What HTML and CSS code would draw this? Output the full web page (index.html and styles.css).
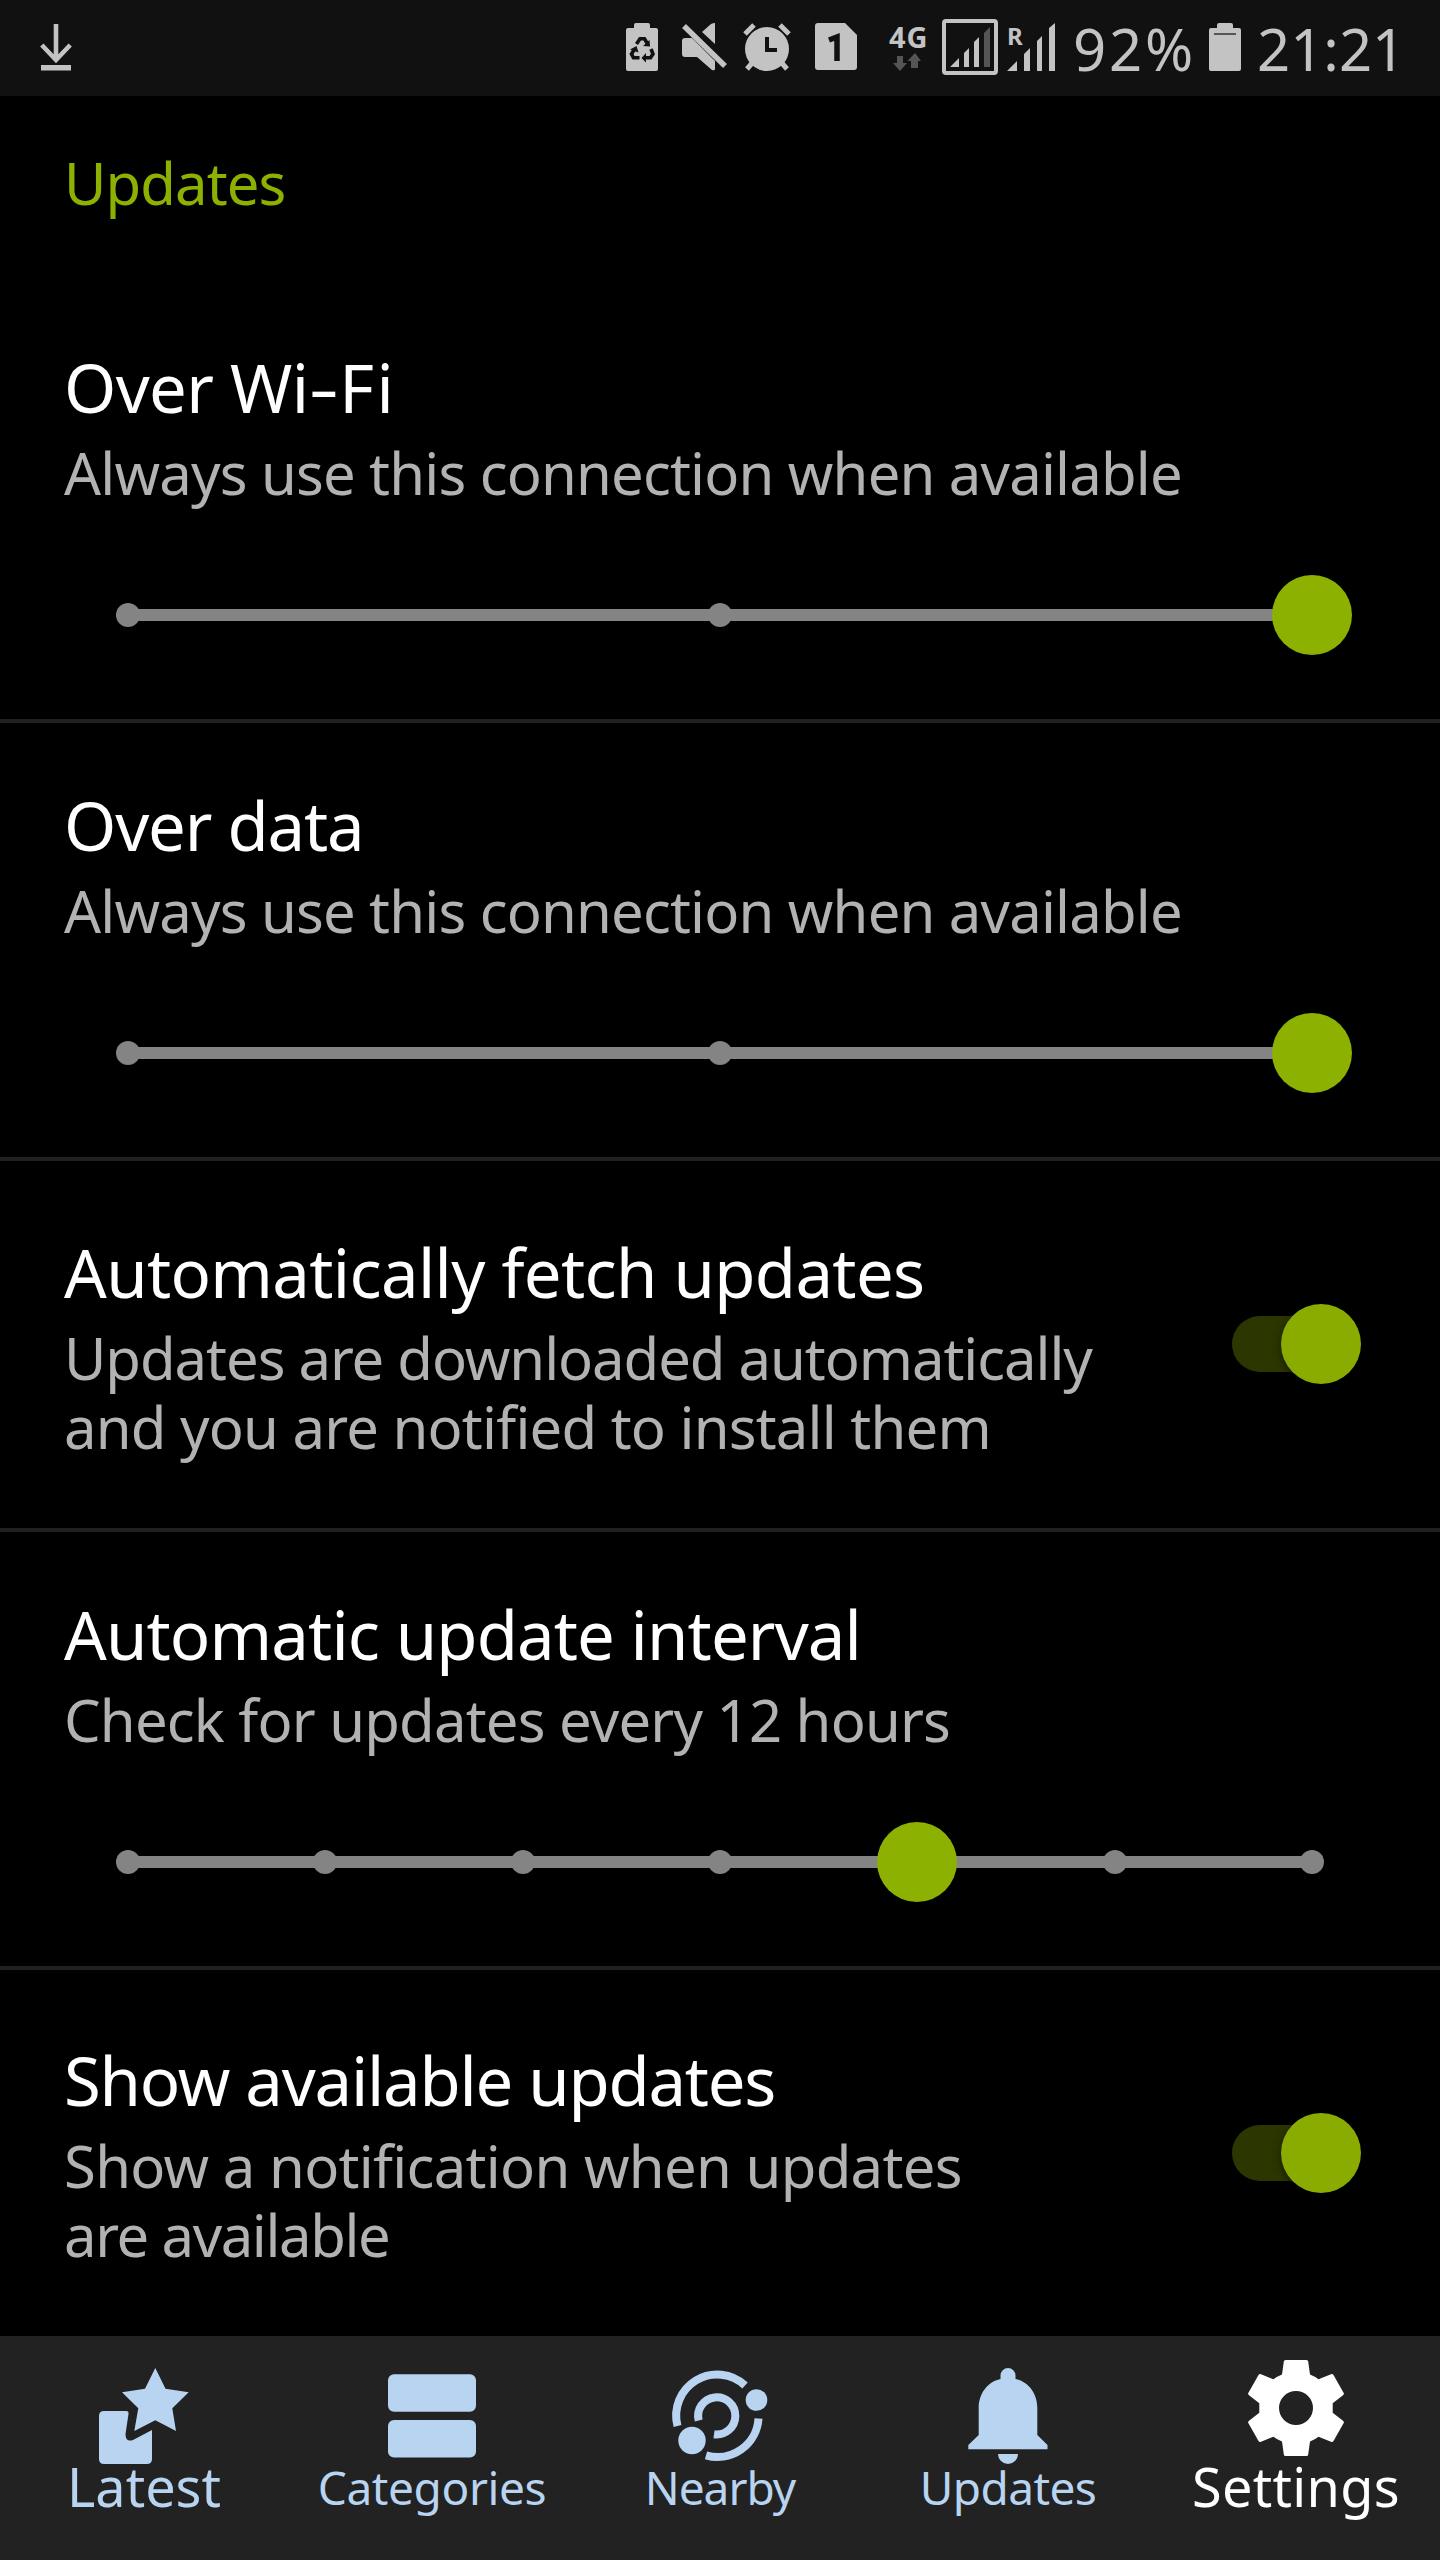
FILE: index.html
```html
<!DOCTYPE html>
<html lang="en">
<head>
<meta charset="utf-8">
<title>Settings</title>
<link rel="stylesheet" href="styles.css">
</head>
<body>
<header class="status">
  <svg class="icon download" width="32" height="48" viewBox="0 0 32 48"><path d="M16 1V37M1.800 22L16 37L30.200 22" fill="none" stroke="currentColor" stroke-width="4.600"/><path d="M1 42H31V47.500H1Z"/></svg>
  <svg class="icon saver" width="32" height="48" viewBox="0 0 32 48"><path d="M2 5H8V2Q8 0 10 0H22Q24 0 24 2V5H30Q32 5 32 7V46Q32 48 30 48H2Q0 48 0 46V7Q0 5 2 5Z"/><g fill="none" stroke="#111" stroke-width="3.600"><path d="M10.500 21L14 15.800H18.500L21 20M25 26L27 31L24.500 34.800H19M13.500 34.800H7.500L5.500 31L8 27"/></g><g fill="#111"><path d="M17 23L24 23.500L23.500 17ZM20 30V39.500L15.500 35ZM4 26.500L10.500 23L12.500 29.500Z"/></g></svg>
  <svg class="icon mute" width="46" height="48" viewBox="0 0 46 48"><path d="M33 0V21L20 9L29 1Q31 0 33 0ZM3 15H10L33 38V46Q33 48 30 47L15 34H3Q0 34 0 31V18Q0 15 3 15Z"/><path d="M5 0L46 40" stroke="#111" stroke-width="5"/><path d="M2 3L43 43" stroke="currentColor" stroke-width="5.500"/></svg>
  <svg class="icon alarm" width="48" height="48" viewBox="0 0 48 48"><circle cx="24" cy="26" r="22"/><g stroke="currentColor" stroke-width="5"><path d="M2 11L11 2M37 2L46 11M4 46L10 39M44 46L38 39"/></g><path d="M24 14V27H34" fill="none" stroke="#111" stroke-width="4"/></svg>
  <svg class="icon sim" width="42" height="47" viewBox="0 0 42 47"><path d="M3 0H30L42 12V44Q42 47 39 47H3Q0 47 0 44V3Q0 0 3 0Z"/><path d="M14 17L22 14V38" fill="none" stroke="#111" stroke-width="5.500"/></svg>
  <div class="network"><span class="network-type">4G</span>
    <svg class="arrows" width="28" height="18" viewBox="0 0 28 18"><path d="M4 3H10V10H14L7 18L0 10H4ZM18 15V8H14.500L22 0L28 8H25V15Z"/></svg></div>
  <svg class="icon signal" width="56" height="56" viewBox="0 0 56 56"><rect x="2" y="2" width="52" height="52" rx="2" fill="none" stroke="currentColor" stroke-width="4"/><path d="M8 48L17 39V48ZM22 48V34L27 29V48ZM32 48V23L37 18V48Z"/><path d="M42 48V14L48 8V48Z" fill="#555"/></svg>
  <div class="roaming"><span class="roaming-mark">R</span>
    <svg class="icon" width="48" height="48" viewBox="0 0 48 48"><path d="M0 48L10 38V48ZM17 48V31L23 25V48ZM30 48V18L35 13V48ZM42 48V5L48 0V48Z"/></svg></div>
  <span class="percent">92%</span>
  <svg class="icon battery" width="32" height="48" viewBox="0 0 32 48"><path d="M2 5H8V2Q8 0 10 0H22Q24 0 24 2V5H30Q32 5 32 7V46Q32 48 30 48H2Q0 48 0 46V7Q0 5 2 5Z"/><path d="M5 10H27V12H5Z" fill="#555"/></svg>
  <span class="clock">21:21</span>
</header>

<main>
  <h2 class="section">Updates</h2>

  <section class="row">
    <h3 class="title">Over Wi<span class="hyphen">-</span><span class="fi">Fi</span></h3>
    <p class="summary s-always">Always use this connection when available</p>
    <div class="slider"><i class="tick"></i><i class="tick"></i><i class="tick thumb"></i></div>
  </section>

  <section class="row">
    <h3 class="title t-data">Over data</h3>
    <p class="summary s-always">Always use this connection when available</p>
    <div class="slider"><i class="tick"></i><i class="tick"></i><i class="tick thumb"></i></div>
  </section>

  <section class="row row-switch">
    <div>
      <h3 class="title t-fetch">Automatically fetch updates</h3>
      <p class="summary"><span class="s-down">Updates are downloaded automatically</span><br><span class="s-and">and you are notified to install them</span></p>
    </div>
    <div class="switch"><i class="knob"></i></div>
  </section>

  <section class="row">
    <h3 class="title t-interval">Automatic update interval</h3>
    <p class="summary s-check">Check for updates every 12 hours</p>
    <div class="slider"><i class="tick"></i><i class="tick"></i><i class="tick"></i><i class="tick"></i><i class="tick thumb"></i><i class="tick"></i><i class="tick"></i></div>
  </section>

  <section class="row row-switch">
    <div>
      <h3 class="title t-show">Show available updates</h3>
      <p class="summary"><span class="s-show">Show a notification when updates</span><br><span class="s-are">are available</span></p>
    </div>
    <div class="switch"><i class="knob"></i></div>
  </section>
</main>

<nav class="tabs">
  <a class="tab tab-large">
    <svg width="96" height="96" viewBox="-8 0 96 96"><path d="M51.300 0L61.500 20.700L84.700 24.300L68.300 40.300L72 63L51.300 52.300L30.300 63L34.300 40.300L18 24.300L41 20.700Z"/><path d="M0 43H22Q25 43 24.500 46L21.500 66Q21.500 74.500 29 72L48 62V91Q48 96 43 96H0Q-5 96-5 91V48Q-5 43 0 43Z"/></svg>
    <span class="l-latest">Latest</span></a>
  <a class="tab">
    <svg width="96" height="96" viewBox="0 0 96 96"><rect x="4" y="6.300" width="88" height="37.500" rx="6"/><rect x="4" y="52" width="88" height="37.500" rx="6"/></svg>
    <span class="l-categories">Categories</span></a>
  <a class="tab">
    <svg width="96" height="96" viewBox="0 0 96 96"><g fill="none" stroke="currentColor" stroke-width="8"><path d="M5.500 58A41 41 0 0 1 73 17.500M86.500 50.500A41 41 0 0 1 34 87.300"/><path d="M26.700 52.500A18.600 18.600 0 1 1 42 66.300"/></g><circle cx="84.500" cy="32" r="10.800"/><circle cx="20" cy="72.500" r="13.700"/></svg>
    <span class="l-nearby">Nearby</span></a>
  <a class="tab">
    <svg width="96" height="96" viewBox="0 0 96 96"><path d="M40.500 11V7.500A7.500 7.500 0 0 1 55.500 7.500V11C69 14 77.300 26 77.300 40V67L87.500 77V81.300H8.300V77L18.700 67V40C18.700 26 27 14 40.500 11ZM38 86H58A10 10 0 0 1 38 86Z"/></svg>
    <span class="l-updates">Updates</span></a>
  <a class="tab tab-large tab-active">
    <svg width="96" height="96" viewBox="0 0 96 96"><path fill-rule="evenodd" d="M37.500 0H58.500Q60 0 60.200 1.500L62 14.500Q67 16.500 70.500 19.300L83 14.300Q84.500 13.700 85.500 15L95.700 33Q96.300 34.200 95 35.200L84.700 43.300V52.700L95 60.800Q96.300 61.800 95.700 63L85.500 81Q84.500 82.300 83 81.700L70.500 76.700Q67 79.500 62 81.500L60.200 94.500Q60 96 58.500 96H37.500Q36 96 35.800 94.500L34 81.500Q29 79.500 25.500 76.700L13 81.700Q11.500 82.300 10.500 81L.3 63Q-.3 61.800 1 60.800L11.300 52.700V43.300L1 35.200Q-.3 34.200.3 33L10.500 15Q11.500 13.700 13 14.300L25.500 19.300Q29 16.500 34 14.500L35.800 1.500Q36 0 37.500 0ZM48 31A17 17 0 1 0 48 65A17 17 0 1 0 48 31Z"/></svg>
    <span class="l-settings">Settings</span></a>
</nav>
</body>
</html>
```
FILE: styles.css
```css
* { box-sizing: border-box; }
body {
  margin: 0;
  width: 1440px;
  height: 2560px;
  overflow: hidden;
  display: flex;
  flex-direction: column;
  background: #000;
  color: #fff;
  font-family: "Noto Sans", sans-serif;
}
h2, h3, p { margin: 0; font-weight: 400; white-space: nowrap; }
svg { display: block; flex: none; fill: currentColor; overflow: visible; }

/* Status bar */
.status {
  height: 96px;
  flex: none;
  display: flex;
  align-items: flex-start;
  padding-left: 40px;
  background: #111;
  color: #c3c3c3;
}
.status > * { flex: none; }
.icon { margin-top: 23px; }
.saver { margin-left: 554px; }
.mute { margin-left: 24px; }
.alarm { margin-left: 15px; }
.sim { margin-left: 24px; }
.network { width: 40px; margin: 26px 0 0 32px; }
.network-type { display: block; font-size: 29px; font-weight: 700; line-height: 21px; letter-spacing: .8px; }
.arrows { margin: 6px 0 0 4px; fill: #555; }
.signal { margin: 19px 0 0 13px; }
.roaming { position: relative; width: 48px; margin-left: 9px; }
.roaming-mark {
  position: absolute;
  left: 0;
  top: 26px;
  font-size: 24px;
  font-weight: 700;
  line-height: 19px;
}
.percent, .clock { font-size: 58px; line-height: 69px; margin-top: 14px; }
.percent { width: 120px; margin-left: 18px; letter-spacing: 2.800px; }
.battery { margin-left: 16px; }
.clock { margin-left: 16px; }

/* Settings list */
main { height: 2240px; flex: none; }
.section {
  height: 189px;
  padding: 52px 0 0 64px;
  font-size: 58px;
  line-height: 70px;
  letter-spacing: -0.9px;
  color: #8cb100;
}
.row {
  height: 438px;
  padding: 62px 64px 0;
  border-bottom: 4px solid #202020;
}
.row-switch {
  height: 371px;
  padding: 3px 78px 0 64px;
  display: flex;
  align-items: center;
  justify-content: space-between;
}
.row:last-child { border-bottom: 0; height: 366px; }
.title { font-size: 67px; line-height: 80px; letter-spacing: -0.65px; }
.summary {
  margin-top: 11px;
  font-size: 58px;
  line-height: 69px;
  letter-spacing: -0.85px;
  color: #b2b2b2;
}
.s-always { letter-spacing: -0.81px; }
.hyphen { display: inline-block; margin: 0 5px 0 5px; transform: scaleX(1.400); }
.fi { letter-spacing: 2.500px; }
.t-data { letter-spacing: -1.150px; }
.t-interval { letter-spacing: -0.850px; }
.t-show { letter-spacing: -1.220px; }
.s-down { letter-spacing: -1.05px; }
.s-and { letter-spacing: -0.78px; }
.s-check { letter-spacing: -0.8px; }
.s-show { letter-spacing: -0.7px; }
.s-are { letter-spacing: -1.4px; }

.slider {
  height: 80px;
  margin: 68px 52px 0;
  display: flex;
  align-items: center;
  justify-content: space-between;
  background: linear-gradient(#848484, #848484) center / calc(100% - 24px) 12px no-repeat;
}
.tick { width: 24px; height: 24px; border-radius: 50%; background: #848484; }
.thumb { width: 80px; height: 80px; margin: 0 -28px; background: #8cb100; z-index: 1; }

.switch {
  width: 112px;
  height: 56px;
  margin: -4px 18px 0 0;
  border-radius: 28px;
  background: #2c3600;
  display: flex;
  align-items: center;
  justify-content: flex-end;
}
.knob {
  flex: none;
  width: 80px;
  height: 80px;
  margin-right: -17px;
  border-radius: 50%;
  background: #8aac00;
  box-shadow: 0 3px 8px rgba(0, 0, 0, .5);
}

/* Bottom navigation */
.tabs {
  flex: none;
  height: 224px;
  display: grid;
  grid-template-columns: repeat(5, 1fr);
  background: #222;
  color: #b9d4f0;
}
.tab {
  display: flex;
  flex-direction: column;
  align-items: center;
  padding-top: 32px;
  font-size: 46px;
  line-height: 60px;
}
.tab span { margin-top: -7px; }
.tab-large { font-size: 54px; }
.tab-large span { margin-top: -8px; }
.tab-active { color: #fff; padding-top: 24px; }
.tab-active span { margin-top: 0; }
.l-categories { letter-spacing: -.4px; }
.l-nearby { letter-spacing: -1px; }
.l-updates { letter-spacing: -.6px; }
.l-settings { letter-spacing: .3px; }
```
